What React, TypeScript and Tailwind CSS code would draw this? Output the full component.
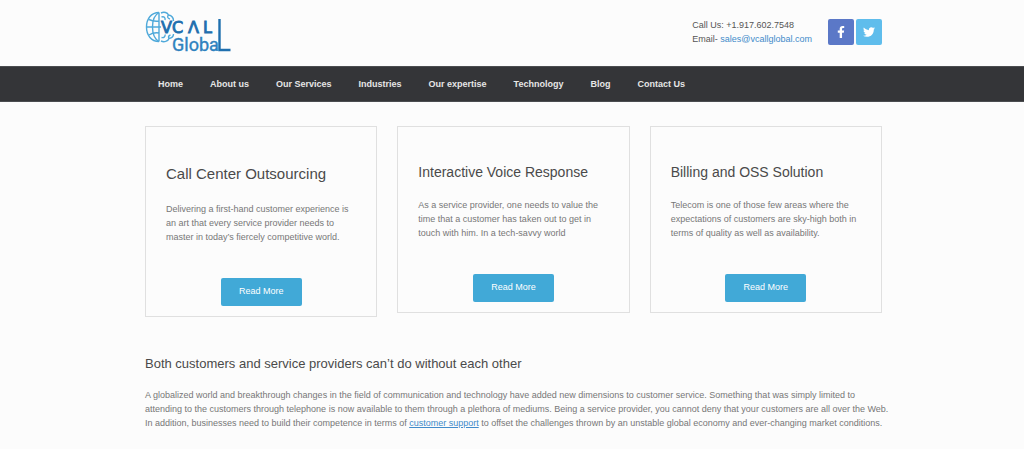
import React from "react";
import { FaFacebookF, FaTwitter } from "react-icons/fa";

const navItems = [
  "Home",
  "About us",
  "Our Services",
  "Industries",
  "Our expertise",
  "Technology",
  "Blog",
  "Contact Us",
];

type Service = { title: string; text: string; featured?: boolean };

const services: Service[] = [
  {
    title: "Call Center Outsourcing",
    text: "Delivering a first-hand customer experience is an art that every service provider needs to master in today’s fiercely competitive world.",
    featured: true,
  },
  {
    title: "Interactive Voice Response",
    text: "As a service provider, one needs to value the time that a customer has taken out to get in touch with him. In a tech-savvy world",
  },
  {
    title: "Billing and OSS Solution",
    text: "Telecom is one of those few areas where the expectations of customers are sky-high both in terms of quality as well as availability.",
  },
];

function Logo() {
  return (
    <svg
      viewBox="0 0 86 44"
      className="h-11 w-[86px]"
      role="img"
      aria-label="VCALL Global"
      fontFamily="'DejaVu Sans', sans-serif"
    >
      <g fill="none" stroke="#4fa9da" strokeWidth="1.4">
        <path d="M14 2.5C6 2.5 1.500 9 1.500 17S6 31.500 14 31.500" />
        <path d="M14 2.500C9.500 5 7.500 10.500 7.500 17S9.500 29 14 31.500" />
        <path d="M14 2.500V31.500M1.500 17H16M4 9.500C8 11.500 11 11.500 14 11M4 25C8 22.500 11 22.500 14 23" />
        <path d="M16 3C19 1.500 22.500 2.500 23.500 5C26.500 5.500 28.500 8 28.500 11" />
        <path d="M16.500 7C19 6 20.500 7.500 20 10M23.500 5C22 6.500 22.500 8.500 25 9" />
        <path d="M16 31C19 32.500 23 31.500 24 28.500C26.500 28 28.500 26 28.500 24" />
        <path d="M16.500 27.500C19 28 20.500 26.500 20 24.500M24 28.500C23 27 23.500 25.500 25.500 25" />
      </g>
      <g fill="#1f6fae" stroke="#1f6fae" strokeWidth="0.9">
        <text x="16" y="23" fontSize="16">V</text>
        <text x="27" y="23" fontSize="16">C</text>
        <text x="43" y="23" fontSize="16">Λ</text>
        <text x="58" y="23" fontSize="16">L</text>
      </g>
      <text
        x="27"
        y="41"
        fontSize="18"
        fontFamily="Roboto, sans-serif"
        fill="#2f82bf"
        stroke="#2f82bf"
        strokeWidth="0.400"
      >
        Globa
      </text>
      <path d="M74.500 9V40H85.500" fill="none" stroke="#1f6fae" strokeWidth="2.400" />
    </svg>
  );
}

function ServiceCard({ title, text, featured }: Service) {
  return (
    <article className="border border-[#e0e0e0] px-5 pb-[10px] pt-[35px]">
      <h2
        className={
          featured
            ? "text-[15px] leading-6 text-[#4a4a4a]"
            : "text-[14px] leading-5 text-[#4a4a4a]"
        }
      >
        {title}
      </h2>
      <p className="mt-4 text-[9px] leading-[14px] text-[#777]">{text}</p>
      <div className="mt-[34px] flex justify-center">
        <button
          type="button"
          className="h-7 w-[81px] rounded-[2px] bg-[#41a9d7] text-[9px] text-white"
        >
          Read More
        </button>
      </div>
    </article>
  );
}

export default function App() {
  return (
    <div className="min-h-screen bg-[#fcfcfc] font-['Liberation_Sans',Arial,sans-serif]">
      <header className="mx-auto flex h-[66px] max-w-[740px] items-center justify-between pb-[3px] pl-[3px]">
        <a href="#home">
          <Logo />
        </a>
        <div className="flex items-center gap-4">
          <address className="text-[9px] leading-[14px] text-[#555] not-italic">
            <p>Call Us: +1.917.602.7548</p>
            <p>
              Email-{" "}
              <a href="mailto:sales@vcallglobal.com" className="text-[#428bca]">
                sales@vcallglobal.com
              </a>
            </p>
          </address>
          <div className="flex gap-[2px]">
            <a
              href="#facebook"
              aria-label="Facebook"
              className="flex size-[26px] items-center justify-center rounded-[2px] bg-[#5b78c7] text-white"
            >
              <FaFacebookF size={12} />
            </a>
            <a
              href="#twitter"
              aria-label="Twitter"
              className="flex size-[26px] items-center justify-center rounded-[2px] bg-[#5fbdec] text-white"
            >
              <FaTwitter size={12} />
            </a>
          </div>
        </div>
      </header>

      <nav className="border-y border-[#4b4d50] bg-[#343538]">
        <ul className="mx-auto flex h-[34px] max-w-[740px] items-center gap-[27px] pl-4">
          {navItems.map((item) => (
            <li key={item}>
              <a href="#" className="block text-[9px] font-bold leading-[14px] text-[#e6e6e6]">
                {item}
              </a>
            </li>
          ))}
        </ul>
      </nav>

      <main className="mx-auto max-w-[740px] pl-[3px] pt-6">
        <div className="grid grid-cols-3 items-start gap-5">
          {services.map((service) => (
            <ServiceCard key={service.title} {...service} />
          ))}
        </div>
        <section className="-mr-4 pt-[35px]">
          <h2 className="text-[13px] leading-6 text-[#4a4a4a]">
            Both customers and service providers can’t do without each other
          </h2>
          <p className="mt-3 text-[9px] leading-[14px] text-[#777]">
            A globalized world and breakthrough changes in the field of communication and technology
            have added new dimensions to customer service. Something that was simply limited to
            <br />
            attending to the customers through telephone is now available to them through a plethora
            of mediums. Being a service provider, you cannot deny that your customers are all over
            the Web. In addition, businesses need to build their competence in terms of{" "}
            <a href="#support" className="text-[#428bca] underline">
              customer support
            </a>{" "}
            to offset the challenges thrown by an unstable global economy and ever-changing market
            conditions.
          </p>
        </section>
      </main>
    </div>
  );
}
